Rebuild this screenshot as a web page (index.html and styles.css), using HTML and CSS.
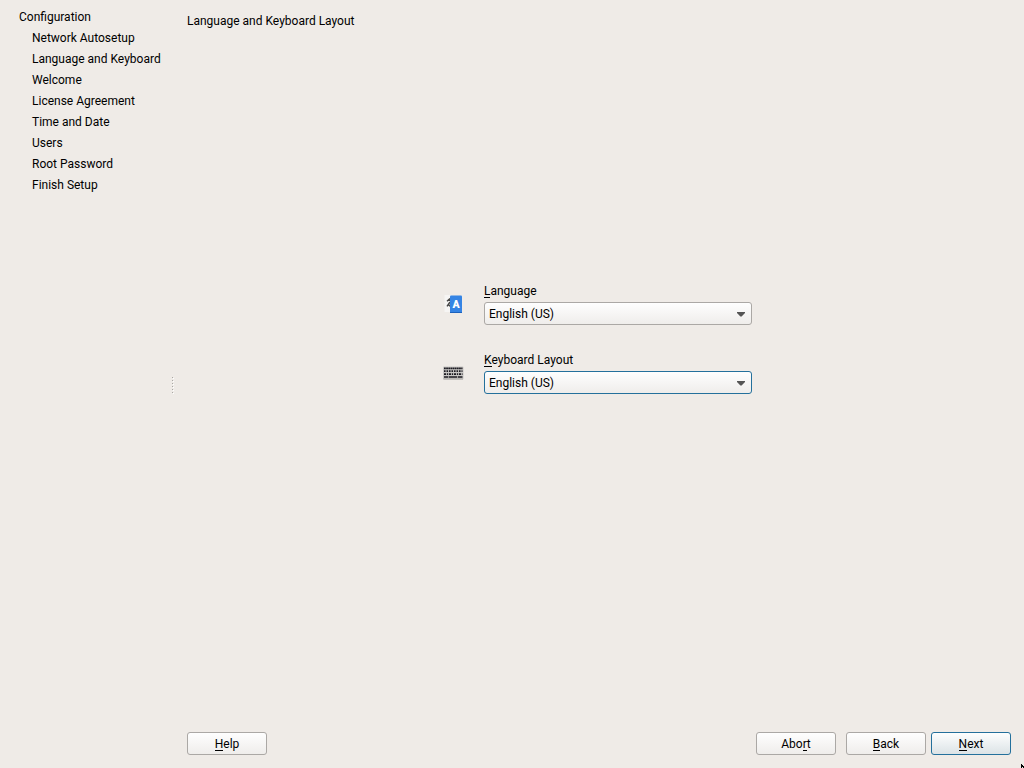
FILE: index.html
```html
<!DOCTYPE html>
<html lang="en">
<head>
<meta charset="utf-8">
<title>Language and Keyboard Layout</title>
<link rel="stylesheet" href="styles.css">
</head>
<body>
<div class="wizard">
  <nav class="steps">
    <div class="steps-title">Configuration</div>
    <ul class="steps-list">
      <li>Network Autosetup</li>
      <li>Language and Keyboard</li>
      <li>Welcome</li>
      <li>License Agreement</li>
      <li>Time and Date</li>
      <li>Users</li>
      <li>Root Password</li>
      <li>Finish Setup</li>
    </ul>
  </nav>
  <div class="splitter"><i></i><i></i><i></i><i></i><i></i><i></i></div>
  <main class="page">
    <h1 class="page-title">Language and Keyboard Layout</h1>
    <div class="form">
      <div class="field">
        <svg class="icon" width="22" height="22" viewBox="0 0 22 22">
          <rect x="2.5" y="2" width="7" height="17" fill="#f6f5f4"/>
          <path d="M8 5.4L5 8.2M8 9L5 13.4M6.2 11L8 13.4M5.4 7.4H8" stroke="#444" stroke-width="1.4" fill="none"/>
          <rect x="8" y="2.5" width="12" height="17.5" rx="1" fill="#3584e4"/>
          <rect x="8" y="19" width="12" height="1" fill="#1c62bd"/>
          <text class="icon-letter" x="14" y="15" text-anchor="middle">A</text>
        </svg>
        <div class="control">
          <label><u>L</u>anguage</label>
          <div class="combo"><span>English (US)</span><svg class="arrow" width="8" height="5" viewBox="0 0 8 5"><path d="M0 0H8V1L4.6 4.6H3.4L0 1Z" fill="#555"/></svg></div>
        </div>
      </div>
      <div class="field">
        <svg class="icon" width="22" height="22" viewBox="0 0 22 22">
          <rect x="1" y="4.5" width="20.5" height="13" rx="1" fill="#c9c7c5"/>
          <rect x="1.5" y="16.5" width="19.5" height="1" fill="#a9a7a4"/>
          <g fill="none" stroke="#1c1b22" stroke-width="1.7">
            <path d="M2 6.3H20.5" stroke-dasharray="1.8 .35"/>
            <path d="M2 9.2H20.5" stroke-dasharray="1.6 .9"/>
            <path d="M2 12.1H20.5" stroke-dasharray="2 .8 1.4 .8"/>
            <path d="M2 15H6.4M7 15H15M15.7 15H20.5"/>
          </g>
        </svg>
        <div class="control">
          <label><u>K</u>eyboard Layout</label>
          <div class="combo focused"><span>English (US)</span><svg class="arrow" width="8" height="5" viewBox="0 0 8 5"><path d="M0 0H8V1L4.6 4.6H3.4L0 1Z" fill="#555"/></svg></div>
        </div>
      </div>
    </div>
    <footer class="actions">
      <button class="btn help"><u>H</u>elp</button>
      <button class="btn abort">Abo<u>r</u>t</button>
      <button class="btn back"><u>B</u>ack</button>
      <button class="btn primary"><u>N</u>ext</button>
    </footer>
  </main>
  <svg class="pointer" width="3" height="4" viewBox="0 0 3 4"><path d="M0 0H1V1H2V2H3V4H2V3H1V4H0Z" fill="#000"/></svg>
</div>
</body>
</html>
```
FILE: styles.css
```css
* { box-sizing: border-box; }
body {
  margin: 0;
  background: #efebe7;
  color: #000;
  font: 12px/14px Roboto, sans-serif;
}
u {
  text-decoration: none;
  border-bottom: 1px solid #000;
  display: inline-block;
  height: 14px;
  line-height: 14px;
  vertical-align: top;
}
.wizard { display: flex; position: relative; width: 1024px; height: 768px; overflow: hidden; }
.steps { width: 170px; padding: 7px 0 0 19px; line-height: 21px; white-space: nowrap; }
.steps-list { list-style: none; margin: 0; padding: 0 0 0 13px; }
.splitter { width: 5px; display: flex; flex-direction: column; justify-content: center; align-items: center; gap: 2px; padding-top: 1px; }
.splitter i { width: 1px; height: 1px; background: #aaa8a5; box-shadow: 1px 1px 0 #fff; }
.page { flex: 1; display: flex; flex-direction: column; padding: 14px 13px 13px 12px; }
.page-title { margin: 0; font-size: 12px; font-weight: 400; line-height: 14px; }
.form { flex: 1; display: flex; flex-direction: column; gap: 28px; padding: 256px 0 0 255px; }
.field { display: flex; gap: 20px; height: 41px; }
.icon { margin-top: 9px; }
.icon-letter { font: 900 10.5px Roboto, sans-serif; fill: #fff; }
.control { width: 268px; }
.control label { display: block; height: 18px; line-height: 14px; }
.combo {
  display: flex;
  align-items: center;
  justify-content: space-between;
  height: 23px;
  padding: 0 6px 0 4px;
  border: 1px solid #aba8a5;
  border-radius: 3px;
  background: linear-gradient(#fefefe, #efedeb);
}
.combo.focused { border-color: #24709c; }
.arrow { margin-top: 1px; }
.actions { display: flex; }
.btn {
  width: 80px;
  height: 23px;
  padding: 0;
  border: 1px solid #aba8a5;
  border-radius: 3px;
  background: linear-gradient(#fefefe, #efedeb);
  color: #000;
  font: 12px/14px Roboto, sans-serif;
}
.abort { margin-left: auto; }
.back { margin-left: 10px; }
.primary { margin-left: 5px; border-color: #24709c; background: linear-gradient(#fdfefe, #dce3e6); }
.pointer { position: absolute; right: 0; bottom: 0; }
```
